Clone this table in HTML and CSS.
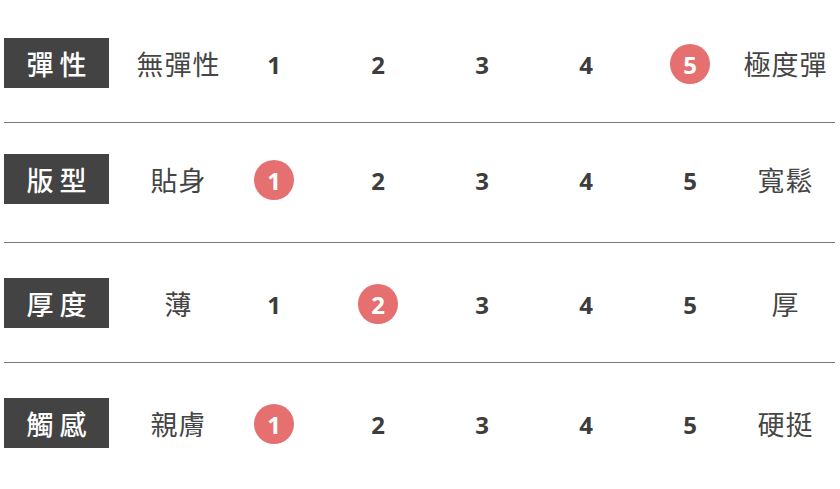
FILE: index.html
```html
<!DOCTYPE html>
<html lang="zh-Hant">
<head>
<meta charset="utf-8">
<title>商品特性</title>
<link rel="stylesheet" href="styles.css">
</head>
<body>
<div class="chart">
  <div class="row">
    <div class="label">彈性</div>
    <div class="low">無彈性</div>
    <div class="cell"><span class="num">1</span></div>
    <div class="cell"><span class="num">2</span></div>
    <div class="cell"><span class="num">3</span></div>
    <div class="cell"><span class="num">4</span></div>
    <div class="cell"><span class="num active">5</span></div>
    <div class="high">極度彈</div>
  </div>
  <div class="row">
    <div class="label">版型</div>
    <div class="low">貼身</div>
    <div class="cell"><span class="num active">1</span></div>
    <div class="cell"><span class="num">2</span></div>
    <div class="cell"><span class="num">3</span></div>
    <div class="cell"><span class="num">4</span></div>
    <div class="cell"><span class="num">5</span></div>
    <div class="high">寬鬆</div>
  </div>
  <div class="row">
    <div class="label">厚度</div>
    <div class="low">薄</div>
    <div class="cell"><span class="num">1</span></div>
    <div class="cell"><span class="num active">2</span></div>
    <div class="cell"><span class="num">3</span></div>
    <div class="cell"><span class="num">4</span></div>
    <div class="cell"><span class="num">5</span></div>
    <div class="high">厚</div>
  </div>
  <div class="row">
    <div class="label">觸感</div>
    <div class="low">親膚</div>
    <div class="cell"><span class="num active">1</span></div>
    <div class="cell"><span class="num">2</span></div>
    <div class="cell"><span class="num">3</span></div>
    <div class="cell"><span class="num">4</span></div>
    <div class="cell"><span class="num">5</span></div>
    <div class="high">硬挺</div>
  </div>
</div>
</body>
</html>
```

FILE: styles.css
```css
* { box-sizing: border-box; }

html, body {
  margin: 0;
  padding: 0;
  background: #ffffff;
}

body {
  font-family: "Noto Sans CJK TC", "Noto Sans", sans-serif;
  color: #444444;
}

.chart {
  width: 835px;
  padding: 3px 0 0 4px;
}

.row {
  display: grid;
  grid-template-columns: 130px 88px repeat(5, 104px) 86px;
  align-items: center;
  padding: 35px 0 34px;
  border-bottom: 1px solid #7a7a7a;
}

.row:nth-child(2) {
  padding-top: 31px;
  padding-bottom: 38px;
}

.row:last-child {
  border-bottom: none;
}

.label {
  width: 105px;
  height: 50px;
  background: #434343;
  color: #ffffff;
  font-size: 27px;
  font-weight: 500;
  letter-spacing: 6px;
  padding-left: 6px;
  display: flex;
  align-items: center;
  justify-content: center;
  line-height: 1;
}

.low,
.high {
  text-align: center;
  font-size: 27px;
  line-height: 1;
  letter-spacing: 1px;
  padding-left: 1px;
  color: #454545;
}

.cell {
  display: flex;
  justify-content: center;
  align-items: center;
}

.num {
  width: 40px;
  height: 40px;
  border-radius: 50%;
  display: flex;
  align-items: center;
  justify-content: center;
  font-family: "Open Sans", "Roboto", sans-serif;
  font-weight: 700;
  font-size: 24px;
  color: #3d3d3d;
  margin-top: 2px;
}

.num.active {
  background: #e66f70;
  color: #ffffff;
}
```
